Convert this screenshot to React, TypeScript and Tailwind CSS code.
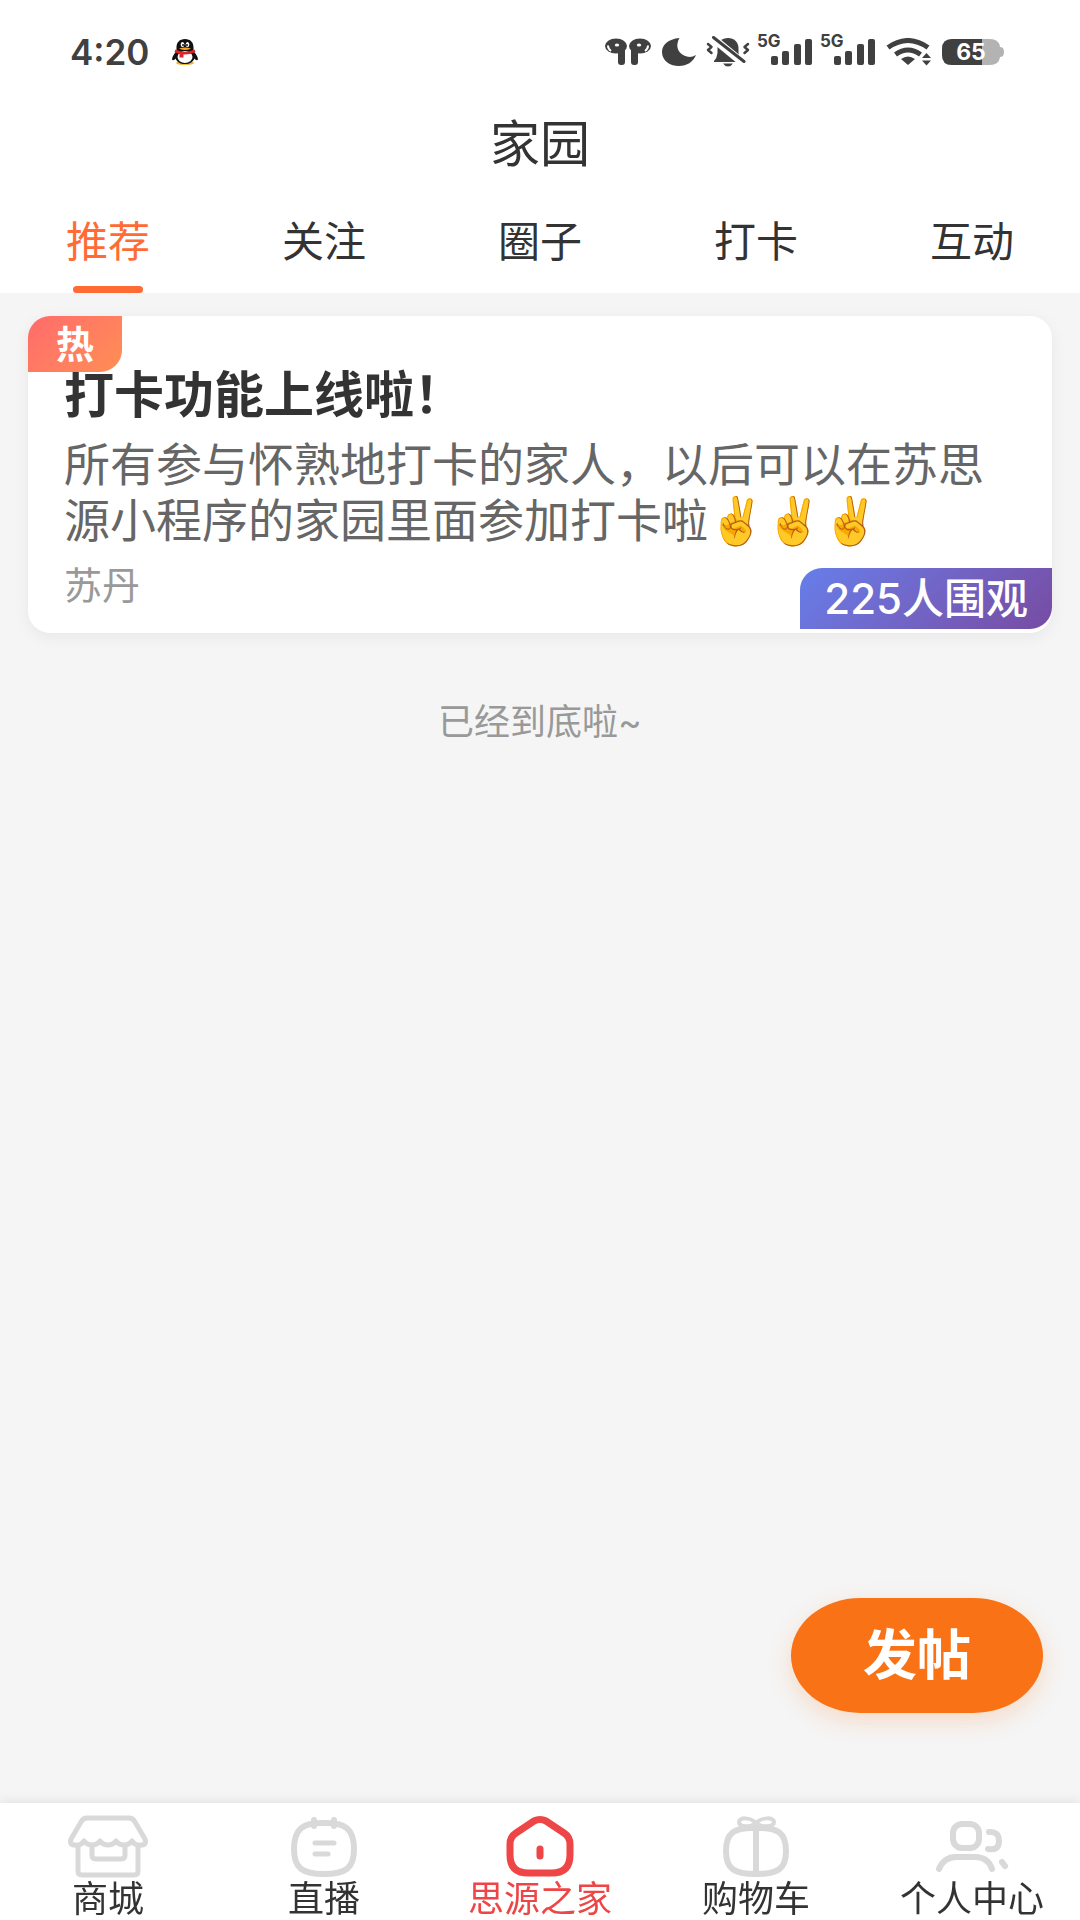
import { FC, ReactNode, useState } from "react";
import clsx from "clsx";

type NavItem = {
  label: string;
  icon: ReactNode;
};

const tabs = ["推荐", "关注", "圈子", "打卡", "互动"];

const SignalIcon: FC = () => (
  <svg width="56" height="44" viewBox="0 -6 56 44" fill="#404040">
    <text
      x="0"
      y="11"
      fontFamily="Inter, sans-serif"
      fontSize="17"
      fontWeight="700"
    >
      5G
    </text>
    <rect x="14" y="20" width="7" height="9" rx="2" />
    <rect x="25" y="15" width="7" height="14" rx="2" />
    <rect x="37" y="8" width="7" height="21" rx="2" />
    <rect x="48" y="3" width="7" height="26" rx="2" />
  </svg>
);

const PenguinIcon: FC = () => (
  <svg width="28" height="28" viewBox="0 0 28 28">
    <ellipse cx="14" cy="25" rx="9" ry="2" fill="#e8b93c" />
    <path
      d="M14 1C8.500 1 5.500 4.500 5.500 9.500V13C3 16 1 19 1 21.500C2 23 3.500 22 4.500 20.500C6 24 9 26 14 26S22 24 23.500 20.500C24.500 22 26 23 27 21.500C27 19 25 16 22.500 13V9.500C22.500 4.500 19.500 1 14 1Z"
      fill="#111"
    />
    <ellipse cx="14" cy="19" rx="7.500" ry="6" fill="#fff" />
    <ellipse cx="11.500" cy="6.500" rx="1.800" ry="2.500" fill="#fff" />
    <ellipse cx="16.500" cy="6.500" rx="1.800" ry="2.500" fill="#fff" />
    <circle cx="12" cy="7" r="1" fill="#111" />
    <circle cx="16" cy="7" r="1" fill="#111" />
    <path d="M8 10.500Q14 8.500 20 10.500Q14 13.500 8 10.500Z" fill="#f5a623" />
    <path
      d="M4.500 11.500Q14 16 23.500 11.500L24.500 14Q18 17 12.500 16.500V19.500H8.500V16Q5.500 15 3.500 14Z"
      fill="#e0242c"
    />
  </svg>
);

const StatusBar: FC = () => (
  <div className="flex h-[104px] items-center justify-between pr-[76px] pl-[70px] text-[#404040]">
    <div className="flex items-center gap-[22px]">
      <span className="text-[35px] leading-10 font-semibold">4:20</span>
      <PenguinIcon />
    </div>
    <div className="flex items-center">
      <svg
        width="46"
        height="28"
        viewBox="0 0 46 28"
        fill="#404040"
        className="mr-[11px]"
      >
        <ellipse cx="11" cy="8" rx="11" ry="7.500" />
        <ellipse cx="35" cy="8" rx="11" ry="7.500" />
        <rect x="13" y="5" width="7" height="22" rx="3" />
        <rect x="26" y="5" width="7" height="22" rx="3" />
        <ellipse cx="12" cy="7" rx="2.200" ry="1.600" fill="#fff" />
        <ellipse cx="34" cy="7" rx="2.200" ry="1.600" fill="#fff" />
        <path
          d="M3 7.500Q3 11 6 13M43 7.500Q43 11 40 13"
          fill="none"
          stroke="#fff"
          strokeWidth="2"
        />
      </svg>
      <svg
        width="34"
        height="28"
        viewBox="0 0 34 28"
        fill="#404040"
        className="mr-[10px]"
      >
        <path d="M17.500 0C6 1 0 7 0 14C0 22 7 28 17 28C25 28 31 24 34 17C30 19.500 26 19.500 22 17.500C15 14 13.500 7 17.500 0Z" />
      </svg>
      <svg
        width="44"
        height="32"
        viewBox="0 0 44 32"
        fill="#404040"
        className="mr-[7px]"
      >
        <path d="M22 2C28 2 32.500 6 32.500 12V17Q33 22 36 25V26H8V25Q11 22 11.500 17V12C11.500 6 16 2 22 2Z" />
        <path d="M17 27.500H27Q25 30.500 22 30.500T17 27.500Z" />
        <path
          d="M6 1.500L37 27"
          fill="none"
          stroke="#fff"
          strokeWidth="8"
        />
        <path
          d="M7.500 1.500L38 25.500"
          fill="none"
          stroke="#404040"
          strokeWidth="3"
          strokeLinecap="round"
        />
        <path
          d="M2 8L5.500 11L2 14L5.500 17M42 8L38.500 11L42 14L38.500 17"
          fill="none"
          stroke="#404040"
          strokeWidth="2.500"
          strokeLinecap="round"
          strokeLinejoin="round"
        />
      </svg>
      <div className="flex items-center gap-[7px]">
        <SignalIcon />
        <SignalIcon />
      </div>
      <svg
        width="46"
        height="28"
        viewBox="0 0 46 28"
        className="mr-[10px] ml-[10px]"
        fill="none"
        stroke="#404040"
        strokeWidth="5"
      >
        <path d="M2 9.500Q22 -4.500 42 9.500" />
        <path d="M9.500 16.500Q22 7.500 34.500 16.500" />
        <path d="M15 21Q22 16 29 21L22 27Z" fill="#404040" stroke="none" />
        <path
          d="M36 20L40.500 15L45 20ZM36 22.500L40.500 27.500L45 22.500Z"
          fill="#404040"
          stroke="none"
        />
      </svg>
      <svg width="62" height="28" viewBox="0 0 62 28">
        <path
          d="M10 1H48Q57 1 58 9Q62 9 62 14T58 19Q57 27 48 27H10Q0 27 0 17V11Q0 1 10 1Z"
          fill="#b3b3b3"
        />
        <path d="M10 1H40V27H10Q0 27 0 17V11Q0 1 10 1Z" fill="#404040" />
        <text
          x="29"
          y="22"
          textAnchor="middle"
          fontFamily="Inter, sans-serif"
          fontSize="23"
          fontWeight="700"
          fill="#fff"
        >
          65
        </text>
      </svg>
    </div>
  </div>
);

const ShopIcon: FC = () => (
  <svg
    width="80"
    height="64"
    viewBox="0 0 80 64"
    fill="none"
    stroke="currentColor"
    strokeWidth="5"
    strokeLinecap="round"
    strokeLinejoin="round"
  >
    <path d="M19 4H61Q65 4 67 8L77 25Q79 31 73 31Q67 32 64 27Q61 31 56 31T48 27Q45 31 40 31T32 27Q29 31 24 31T16 27Q13 32 7 31Q1 31 3 25L13 8Q15 4 19 4Z" />
    <path d="M10 34V57Q10 61 14 61H66Q70 61 70 57V34" />
    <path d="M24 34V41Q24 45 28 45H53Q57 45 57 41V34" />
  </svg>
);

const LiveIcon: FC = () => (
  <svg
    width="68"
    height="64"
    viewBox="0 0 68 64"
    fill="none"
    stroke="currentColor"
    strokeWidth="5"
    strokeLinecap="round"
  >
    <path
      d="M34 9C56 8 64 16 64 35S56 60 34 60S4 54 4 35S12 8 34 9Z"
      strokeWidth="6"
    />
    <path d="M24 6V12M44 6V12" strokeWidth="6" />
    <path d="M25 29H44M25 40H38" />
  </svg>
);

const HomeIcon: FC = () => (
  <svg
    width="68"
    height="64"
    viewBox="0 0 68 64"
    fill="none"
    stroke="currentColor"
    strokeWidth="7"
    strokeLinecap="round"
    strokeLinejoin="round"
  >
    <path d="M28 7Q34 4 40 7L58 19Q64 23 64 30V41Q64 59 46 59H22Q4 59 4 41V30Q4 23 10 19Z" />
    <path d="M34 35V42" />
  </svg>
);

const GiftIcon: FC = () => (
  <svg
    width="68"
    height="64"
    viewBox="0 0 68 64"
    fill="none"
    stroke="currentColor"
    strokeWidth="6"
    strokeLinecap="round"
    strokeLinejoin="round"
  >
    <path d="M34 14C56 13 64 19 64 37S56 60 34 60S4 55 4 37S12 13 34 14Z" />
    <path d="M34 10V60" />
    <path
      d="M34 9C28 3 17 3 17 8S28 14 34 9C40 3 52 3 52 8S40 14 34 9Z"
      strokeWidth="4"
    />
  </svg>
);

const UserIcon: FC = () => (
  <svg
    width="76"
    height="64"
    viewBox="0 0 76 64"
    fill="none"
    stroke="currentColor"
    strokeWidth="6"
    strokeLinecap="round"
  >
    <rect x="19" y="10" width="26" height="24" rx="9" />
    <path d="M5 55Q10 43 22 43H41Q54 43 58 55" />
    <path d="M55 18Q65 17 65 27T54 35" />
    <path d="M68 48L71 52" />
  </svg>
);

const navItems: NavItem[] = [
  { label: "商城", icon: <ShopIcon /> },
  { label: "直播", icon: <LiveIcon /> },
  { label: "思源之家", icon: <HomeIcon /> },
  { label: "购物车", icon: <GiftIcon /> },
  { label: "个人中心", icon: <UserIcon /> },
];

const PostCard: FC = () => (
  <article className="relative mx-7 mt-[23px] rounded-[22px] bg-white px-9 pt-[49px] pb-6 shadow-[0_4px_16px_rgba(0,0,0,0.06)]">
    <span className="absolute top-0 left-0 rounded-tl-[22px] rounded-br-[22px] bg-linear-135 from-[#ff6b6b] to-[#ff8e53] px-7 text-[38px] leading-14 font-bold text-white">
      热
    </span>
    <h2 className="text-[50px] leading-[60px] font-bold text-[#333]">
      打卡功能上线啦！
    </h2>
    <p className="mt-[11px] text-[46px] leading-14 text-[#666]">
      所有参与怀熟地打卡的家人，以后可以在苏思源小程序的家园里面参加打卡啦✌️✌️✌️
    </p>
    <p className="mt-[13px] text-[38px] leading-12 text-[#999]">苏丹</p>
    <span className="absolute right-0 bottom-1 rounded-tl-[22px] rounded-br-[22px] bg-linear-135 from-[#667eea] to-[#764ba2] px-6 text-[42px] leading-[61px] font-medium text-white">
      225人围观
    </span>
  </article>
);

const App: FC = () => {
  const [tab, setTab] = useState(0);
  const [page, setPage] = useState(2);

  return (
    <div className="flex min-h-screen flex-col bg-[#f5f5f5] font-[Inter,'Noto_Sans_CJK_SC',sans-serif]">
      <header className="bg-white">
        <StatusBar />
        <h1 className="text-center text-[50px] leading-20 text-[#333]">家园</h1>
        <nav className="grid h-[109px] grid-cols-5">
          {tabs.map((name, i) => (
            <button
              key={name}
              type="button"
              onClick={() => setTab(i)}
              className={clsx(
                "flex flex-col items-center justify-between pt-[34px] text-[42px] leading-12",
                i === tab ? "text-[#ff6b35]" : "text-[#333]",
              )}
            >
              {name}
              {i === tab && (
                <span className="h-[7px] w-[70px] rounded-full bg-[#ff6b35]" />
              )}
            </button>
          ))}
        </nav>
      </header>

      <main className="flex-1 pb-[117px]">
        <PostCard />
        <p className="mt-[65px] text-center text-[36px] leading-12 text-[#999]">
          已经到底啦~
        </p>
      </main>

      <button
        type="button"
        className="fixed right-[37px] bottom-[207px] h-[115px] w-[252px] rounded-[70px/58px] bg-[#f97316] text-[54px] font-bold text-white shadow-[0_8px_24px_rgba(249,115,22,0.2)]"
      >
        发帖
      </button>

      <nav className="fixed inset-x-0 bottom-0 grid grid-cols-5 bg-white pt-[11px] shadow-[0_-2px_10px_rgba(0,0,0,0.08)]">
        {navItems.map((item, i) => (
          <button
            key={item.label}
            type="button"
            onClick={() => setPage(i)}
            className={clsx(
              "flex flex-col items-center",
              i === page ? "text-[#ee4646]" : "text-[#d9d9d9]",
            )}
          >
            {item.icon}
            <span
              className={clsx(
                "text-[36px] leading-[42px]",
                i !== page && "text-[#333]",
              )}
            >
              {item.label}
            </span>
          </button>
        ))}
      </nav>
    </div>
  );
};

export default App;
